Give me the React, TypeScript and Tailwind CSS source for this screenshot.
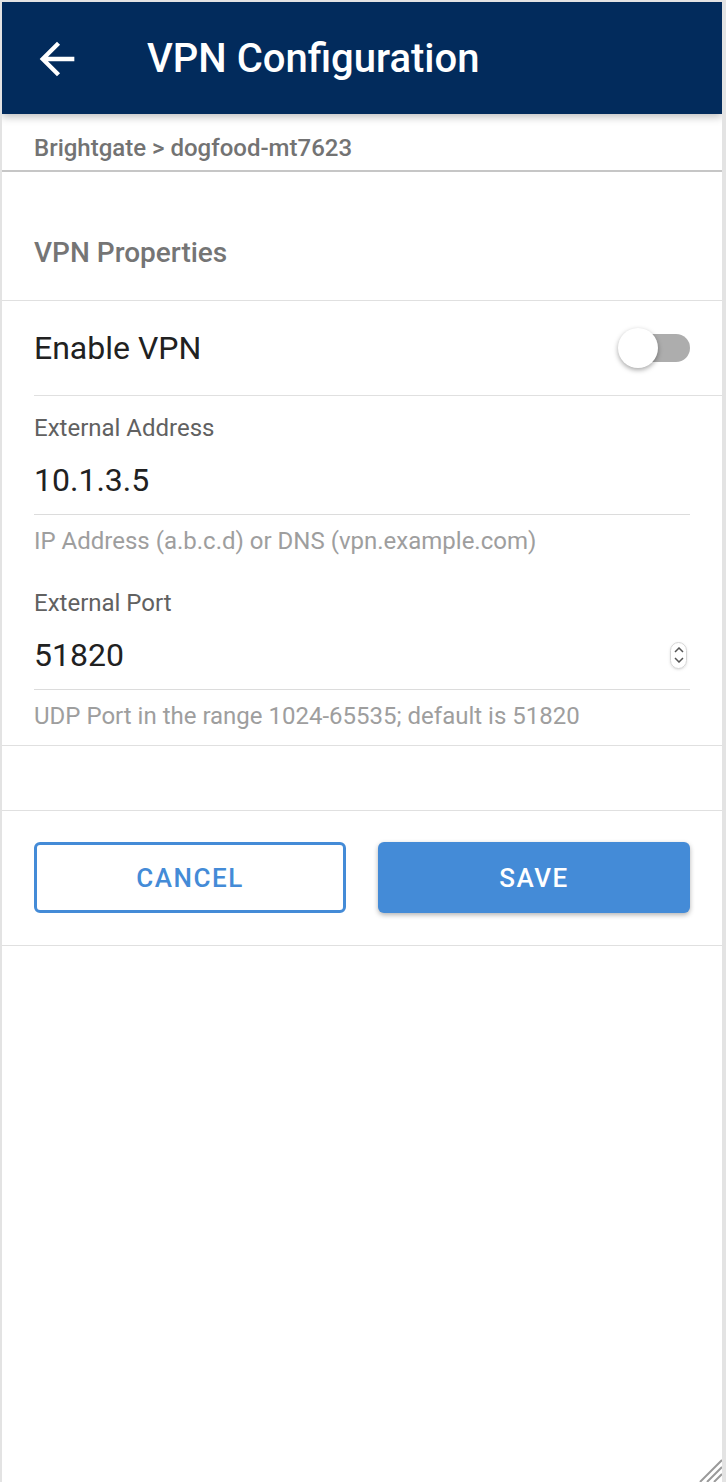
import React from "react";

const font = { fontFamily: "Roboto, 'Liberation Sans', sans-serif" };

function Field({
  label,
  value,
  helper,
  spinner,
  first,
}: {
  label: string;
  value: string;
  helper: string;
  spinner?: boolean;
  first?: boolean;
}) {
  return (
    <div className={first ? "" : "mt-[34px]"}>
      <div className="text-[24px] leading-[28px] text-[#616161]">{label}</div>
      <div className="flex items-center justify-between border-b border-[#dcdcdc] pt-[18px] pb-[14px]">
        <span className="text-[32px] leading-[40px] text-[#212121]">{value}</span>
        {spinner && (
          <span className="mr-[3px] flex h-[27px] w-[17px] flex-col items-center justify-center rounded-full border border-[#d6d6d6] shadow-sm">
            <svg viewBox="0 0 10 6" className="h-[6px] w-[10px]">
              <path d="M1 5 L5 1 L9 5" fill="none" stroke="#555" strokeWidth="1.5" />
            </svg>
            <svg viewBox="0 0 10 6" className="mt-[4px] h-[6px] w-[10px]">
              <path d="M1 1 L5 5 L9 1" fill="none" stroke="#555" strokeWidth="1.5" />
            </svg>
          </span>
        )}
      </div>
      <div className="mt-[12px] text-[24px] leading-[28px] text-[#9e9e9e]">{helper}</div>
    </div>
  );
}

export default function App() {
  return (
    <div
      className="relative h-[1482px] w-[726px] overflow-hidden border-t-2 border-r-4 border-l-2 border-[#e3e3e3] bg-white"
      style={font}
    >
      {/* App bar */}
      <header className="relative z-10 flex h-[112px] items-center bg-[#022b5c] pt-[2px] shadow-[0_3px_8px_rgba(0,0,0,0.25)]">
        <svg viewBox="0 0 24 24" className="ml-[29px] h-[52px] w-[52px]" fill="#fff">
          <path d="M20 11H7.83l5.59-5.59L12 4l-8 8 8 8 1.41-1.41L7.83 13H20v-2z" />
        </svg>
        <h1 className="ml-[64px] text-[40px] font-medium leading-none text-white">VPN Configuration</h1>
      </header>

      {/* Breadcrumb */}
      <div className="flex h-[58px] items-center border-b-2 border-[#c6c6c6] px-[32px] pt-[11px]">
        <span className="text-[24px] font-medium text-[#737373]">Brightgate &gt; dogfood-mt7623</span>
      </div>

      {/* Section title */}
      <div className="flex h-[129px] items-end border-b border-[#e0e0e0] px-[32px] pb-[31px]">
        <span className="text-[28px] font-medium leading-[32px] text-[#757575]">VPN Properties</span>
      </div>

      {/* Enable switch */}
      <div className="ml-[32px] flex h-[95px] items-center justify-between border-b border-[#e0e0e0] pr-[32px]">
        <span className="text-[32px] leading-[40px] text-[#212121]">Enable VPN</span>
        <div className="relative h-[40px] w-[72px]">
          <div className="absolute top-[6px] right-0 h-[28px] w-[66px] rounded-full bg-[#adadad]" />
          <div className="absolute top-0 left-0 h-[40px] w-[40px] rounded-full bg-white shadow-[0_2px_5px_rgba(0,0,0,0.35)]" />
        </div>
      </div>

      {/* Fields */}
      <div className="border-b border-[#e0e0e0] px-[32px] pt-[18px] pb-[15px]">
        <Field
          first
          label="External Address"
          value="10.1.3.5"
          helper="IP Address (a.b.c.d) or DNS (vpn.example.com)"
        />
        <Field
          label="External Port"
          value="51820"
          helper="UDP Port in the range 1024-65535; default is 51820"
          spinner
        />
      </div>

      <div className="h-[65px] border-b border-[#e0e0e0]" />

      {/* Actions */}
      <div className="grid grid-cols-2 gap-[32px] border-b border-[#e0e0e0] px-[32px] pt-[31px] pb-[32px]">
        <button className="flex h-[71px] items-center justify-center rounded-[6px] border-[3px] border-[#448bd7] pt-[2px] text-[26px] font-medium tracking-[1.5px] text-[#448bd7]">
          CANCEL
        </button>
        <button className="flex h-[71px] items-center justify-center rounded-[6px] bg-[#448bd7] pt-[2px] text-[26px] font-medium tracking-[1.5px] text-white shadow-[0_2px_5px_rgba(0,0,0,0.3)]">
          SAVE
        </button>
      </div>

      {/* Resize grip */}
      <svg viewBox="0 0 24 24" className="absolute right-0 bottom-0 h-[24px] w-[24px]">
        <path d="M2 24 L24 2 M9 24 L24 9 M16 24 L24 16" stroke="#9a9a9a" strokeWidth="2" />
      </svg>
    </div>
  );
}
